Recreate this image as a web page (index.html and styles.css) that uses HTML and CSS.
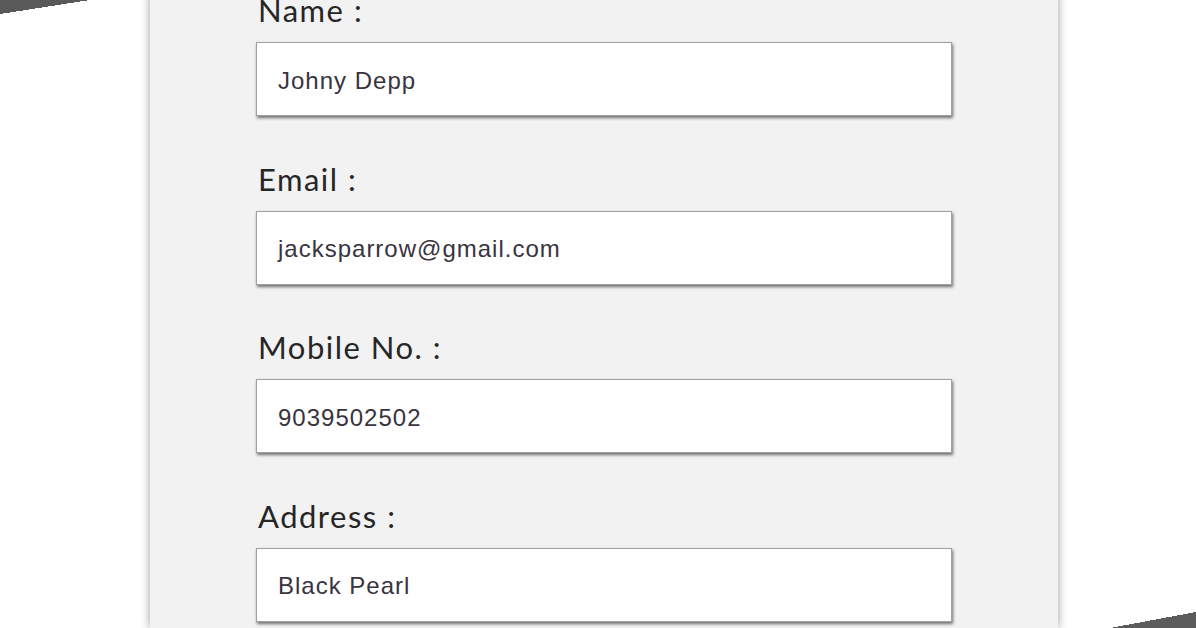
FILE: index.html
```html
<!DOCTYPE html>
<html lang="en">
<head>
<meta charset="utf-8">
<title>Form</title>
<link rel="stylesheet" href="styles.css">
</head>
<body>
<div class="corner corner-tl"></div>
<div class="corner corner-br"></div>
<main class="panel">
  <form class="form">
    <div class="field">
      <label class="label">Name :</label>
      <div class="input">Johny Depp</div>
    </div>
    <div class="field">
      <label class="label">Email :</label>
      <div class="input">jacksparrow@gmail.com</div>
    </div>
    <div class="field">
      <label class="label">Mobile No. :</label>
      <div class="input">9039502502</div>
    </div>
    <div class="field">
      <label class="label">Address :</label>
      <div class="input">Black Pearl</div>
    </div>
  </form>
</main>
</body>
</html>
```

FILE: styles.css
```css
html, body {
  margin: 0;
  padding: 0;
  background: #ffffff;
  overflow: hidden;
  height: 628px;
}
body {
  position: relative;
  width: 1196px;
}
.corner {
  position: absolute;
  z-index: 2;
}
.corner-tl {
  left: 0;
  top: 0;
  width: 90px;
  height: 14px;
  background: linear-gradient(to bottom right, #595959 50%, transparent 50%);
}
.corner-br {
  right: 0;
  bottom: 0;
  width: 86px;
  height: 16px;
  background: linear-gradient(to top left, #5c5c5c 50%, transparent 50%);
}
.panel {
  margin-left: 150px;
  width: 908px;
  height: 636px;
  margin-top: -8px;
  background: #f2f2f2;
  box-shadow: 0 0 9px rgba(0, 0, 0, 0.38);
  display: flex;
  justify-content: center;
}
.form {
  width: 696px;
  display: flex;
  flex-direction: column;
}
.field {
  display: flex;
  flex-direction: column;
  height: 168.5px;
}
.field:last-child {
  height: auto;
}
.label {
  font-family: "Lato", "DejaVu Sans", sans-serif;
  font-size: 31px;
  line-height: 36px;
  letter-spacing: 1.5px;
  color: #262626;
  margin-left: 2px;
  margin-bottom: 14px;
}
.input {
  box-sizing: border-box;
  height: 74px;
  background: #ffffff;
  border: 1px solid #a0a0a0;
  box-shadow: 1px 2px 3px rgba(0, 0, 0, 0.55);
  font-family: "Liberation Sans", Arial, sans-serif;
  font-size: 24px;
  letter-spacing: 1px;
  color: #3a3340;
  padding-left: 21px;
  padding-top: 3px;
  display: flex;
  align-items: center;
}
```
